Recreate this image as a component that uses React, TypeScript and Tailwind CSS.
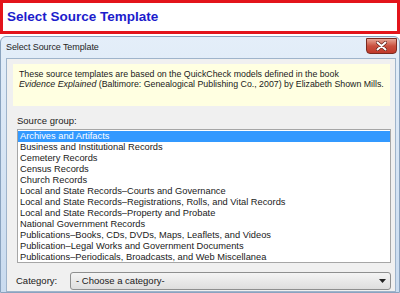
import React from "react";

const groups = [
  "Archives and Artifacts",
  "Business and Institutional Records",
  "Cemetery Records",
  "Census Records",
  "Church Records",
  "Local and State Records–Courts and Governance",
  "Local and State Records–Registrations, Rolls, and Vital Records",
  "Local and State Records–Property and Probate",
  "National Government Records",
  "Publications–Books, CDs, DVDs, Maps, Leaflets, and Videos",
  "Publication–Legal Works and Government Documents",
  "Publications–Periodicals, Broadcasts, and Web Miscellanea",
];

const ui = { fontFamily: '"Liberation Sans", Arial, sans-serif' };

const App = () => {
  return (
    <div className="w-[400px] h-[293px] overflow-hidden bg-white flex flex-col" style={ui}>
      {/* page heading */}
      <div className="h-[34px] shrink-0 border-[3px] border-[#e3141b] bg-white flex items-center px-[4px]">
        <span className="text-[13.5px] font-bold text-[#1c1ccc] leading-none">
          Select Source Template
        </span>
      </div>

      {/* dialog window */}
      <div className="flex-1 mt-[2px] rounded-t-[6px] border border-[#8aa3bf] bg-gradient-to-b from-[#e4eef9] to-[#c9dbef] flex flex-col">
        <div className="h-[21px] shrink-0 flex items-center justify-between pl-[5px] pr-[2px]">
          <span className="text-[9px] tracking-[-0.1px] text-[#1e1e1e]">Select Source Template</span>
          <div className="w-[31px] h-[16px] -mt-[4px] rounded-b-[4px] border border-[#7a2a20] bg-gradient-to-b from-[#e6a596] via-[#c9503f] to-[#c0392b] flex items-center justify-center">
            <svg width="11" height="10" viewBox="0 0 11 10">
              <path d="M1.5 1.5 L9.5 8.5 M9.5 1.5 L1.5 8.5" stroke="#5a1a14" strokeWidth="3.2" strokeLinecap="round" />
              <path d="M1.5 1.5 L9.5 8.5 M9.5 1.5 L1.5 8.5" stroke="#ffffff" strokeWidth="2" strokeLinecap="round" />
            </svg>
          </div>
        </div>

        <div className="flex-1 ml-[5px] mr-[3px] border border-[#9fb4cb] bg-[#f0f0f0] pl-[6px] pr-[5px] pt-[5px] flex flex-col">
          <div className="h-[42px] bg-[#ffffe1] px-[6px] pt-[5px] text-[8.8px] leading-[10px] text-[#1a1a1a] whitespace-nowrap">
            <div>These source templates are based on the QuickCheck models defined in the book</div>
            <div>
              <i>Evidence Explained</i> (Baltimore: Genealogical Publishing Co., 2007) by Elizabeth Shown Mills.
            </div>
          </div>

          <div className="mt-[9px] pl-[4px] text-[9.5px] leading-[11px] text-[#1a1a1a]">Source group:</div>

          <div className="mt-[3px] ml-[4px] mr-[-1px] h-[134px] border border-[#a6a6a6] bg-white py-[1px]">
            {groups.map((g, i) => (
              <div
                key={g}
                className={`h-[11px] leading-[11px] px-[2px] text-[9.3px] whitespace-nowrap ${
                  i === 0 ? "bg-[#3399ff] text-white" : "text-[#1a1a1a]"
                }`}
              >
                {g}
              </div>
            ))}
          </div>

          <div className="mt-[9px] flex items-center pl-[3px]">
            <span className="w-[54px] text-[9.5px] text-[#1a1a1a]">Category:</span>
            <div className="flex-1 mr-[-1px] h-[18px] rounded-[3px] border border-[#8e8f8f] bg-gradient-to-b from-[#f4f4f4] to-[#dedede] flex items-center justify-between pl-[5px] pr-[4px]">
              <span className="text-[9.5px] text-[#1a1a1a]">- Choose a category-</span>
              <svg width="7" height="4" viewBox="0 0 7 4">
                <path d="M0 0 L7 0 L3.5 4 Z" fill="#222" />
              </svg>
            </div>
          </div>
        </div>
      </div>
    </div>
  );
};

export default App;
